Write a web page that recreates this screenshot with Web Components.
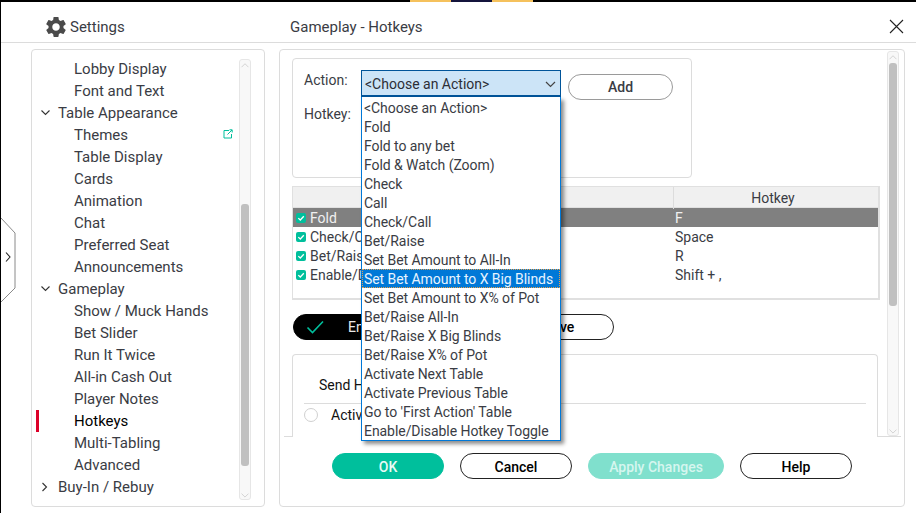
<!DOCTYPE html>
<html lang="en"><head><meta charset="utf-8"><title>Settings</title>
<style>
html,body{margin:0;padding:0;background:#fff;width:916px;height:513px;overflow:hidden}
body{font-family:Roboto,"Liberation Sans",sans-serif;color:#3a3c44}
</style></head><body>
<ps-app></ps-app>
<script>
const def=(name,html,setup)=>customElements.define(name,class extends HTMLElement{
  constructor(){super();this.attachShadow({mode:'open'}).innerHTML=html;}
  connectedCallback(){if(setup)setup(this,this.shadowRoot);}
});
const chevUp='<path d="M2 8 L6.5 3.5 L11 8" fill="none" stroke="#c8c8c8" stroke-width="1"/>';
const chevDown='<path d="M2 4 L6.5 8.5 L11 4" fill="none" stroke="#c8c8c8" stroke-width="1"/>';

def('ps-scrollbar',`<style>
:host{display:flex;flex-direction:column;box-sizing:border-box;width:var(--w,12px);height:var(--h,100%);border:1px solid #e6e6e6;border-radius:3px;background:#f8f8f8}
svg{display:block;width:100%;height:9px;flex:none}
.track{flex:1;padding:var(--before,0) 1px 0;box-sizing:border-box;min-height:0}
.thumb{height:var(--thumb,100px);background:#c0c0c0;border-radius:3px}
</style><svg viewBox="0 0 13 9">${chevUp}</svg><div class="track"><div class="thumb"></div></div><svg viewBox="0 0 13 11" preserveAspectRatio="xMidYMax meet">${chevDown}</svg>`);

def('ps-panel',`<style>
:host{display:block;box-sizing:border-box;border:1px solid #dcdcdc;border-radius:4px;background:#fff}
</style><slot></slot>`);

def('ps-button',`<style>
:host{display:inline-flex;align-items:center;justify-content:center;box-sizing:border-box;height:26px;width:var(--bw,112px);border-radius:13px;font:500 14px Roboto,sans-serif;padding-top:var(--pt,0);border:1px solid #222;color:#000;background:#fff;flex:none}
:host([variant=primary]){background:#00bf9c;border-color:#00bf9c;color:#e9fbf6}
:host([variant=disabled]){background:#80e0cd;border-color:#80e0cd;color:#d6f6ef}
:host([variant=soft]){border-color:#9a9a9a;color:#3a3c44}
:host([variant=dark]){background:#000;border-color:#000;color:#e8e8e8;font-weight:400;justify-content:flex-start;padding-left:12px;gap:23px}
</style><slot></slot>`);

def('ps-header',`<style>
:host{display:flex;align-items:center;box-sizing:border-box;height:41px;border-bottom:1px solid #dcdcdc;padding:9px 0 0 45px;font:15px Roboto,sans-serif;color:#3a3c44}
.a{display:flex;align-items:center;gap:4px;width:244px;flex:none}
.b{flex:1}
svg.g{width:20px;height:20px;display:block;fill:#4a4a4a}
svg.x{width:15px;height:15px;display:block;margin-right:12px}
</style><div class="a"><svg class="g" viewBox="2.4 2.4 19.2 19.2"><path d="M19.14 12.94c.04-.3.06-.61.06-.94 0-.32-.02-.64-.07-.94l2.03-1.58c.18-.14.23-.41.12-.61l-1.92-3.32c-.12-.22-.37-.29-.59-.22l-2.39.96c-.5-.38-1.03-.7-1.62-.94l-.36-2.54c-.04-.24-.24-.41-.48-.41h-3.84c-.24 0-.43.17-.47.41l-.36 2.54c-.59.24-1.13.57-1.62.94l-2.39-.96c-.22-.08-.47 0-.59.22L2.74 8.87c-.12.21-.08.47.12.61l2.03 1.58c-.05.3-.09.63-.09.94s.02.64.07.94l-2.03 1.58c-.18.14-.23.41-.12.61l1.92 3.32c.12.22.37.29.59.22l2.39-.96c.5.38 1.03.7 1.62.94l.36 2.54c.05.24.24.41.48.41h3.84c.24 0 .44-.17.47-.41l.36-2.54c.59-.24 1.13-.56 1.62-.94l2.39.96c.22.08.47 0 .59-.22l1.92-3.32c.12-.22.07-.47-.12-.61l-2.01-1.58zM12 15.6c-1.98 0-3.6-1.62-3.6-3.6s1.62-3.6 3.6-3.6 3.6 1.62 3.6 3.6-1.62 3.6-3.6 3.6z"/></svg><span>Settings</span></div><div class="b">Gameplay - Hotkeys</div><svg class="x" viewBox="0 0 15 15"><path d="M1 1 L14 14 M14 1 L1 14" stroke="#222" stroke-width="1.1" fill="none"/></svg>`);

def('ps-tree-item',`<style>
:host{display:flex;align-items:center;position:relative;height:22px;padding-left:42px;font:15px/22px Roboto,sans-serif;color:#3a3c44;white-space:nowrap}
:host([level="0"]){padding-left:26px}
:host([selected]){color:#000}
:host([selected])::before{content:"";position:absolute;left:4px;top:0;width:3px;height:22px;background:#dc0029}
.c{position:absolute;left:8px;top:7px;width:12px;height:8px;display:none}
:host([open]) .c.o,:host([closed]) .c.s{display:block}
.c.s{left:9px;top:5px;width:8px;height:12px}
.l{position:absolute;left:191px;top:5px;width:10px;height:10px;display:none}
:host([link]) .l{display:block}
</style><svg class="c o" viewBox="0 0 12 8"><path d="M1.5 1.5 L5.5 5.5 L9.5 1.5" fill="none" stroke="#333" stroke-width="1.1"/></svg><svg class="c s" viewBox="0 0 8 12"><path d="M1.5 2 L5.5 6 L1.5 10" fill="none" stroke="#333" stroke-width="1.1"/></svg><slot></slot><svg class="l" viewBox="0 0 10 10" ><path d="M6 1.5 H1 V9 H8.5 V5 M4.5 5.5 L9 1 M6.5 .8 H9.2 V3.5" fill="none" stroke="#00bf9c" stroke-width="1"/></svg>`);

def('ps-sidebar',`<style>
:host{display:block;width:234px;flex:none}
ps-panel{height:458px;display:flex;position:relative;padding:8px 0 0 0;box-sizing:border-box}
.tree{width:207px;flex:none}
.sb{margin-top:1px;--w:12px;--h:441px;--before:135px;--thumb:262px}
</style><ps-panel id="p"><div class="tree">
<ps-tree-item>Lobby Display</ps-tree-item>
<ps-tree-item>Font and Text</ps-tree-item>
<ps-tree-item level="0" open>Table Appearance</ps-tree-item>
<ps-tree-item link>Themes</ps-tree-item>
<ps-tree-item>Table Display</ps-tree-item>
<ps-tree-item>Cards</ps-tree-item>
<ps-tree-item>Animation</ps-tree-item>
<ps-tree-item>Chat</ps-tree-item>
<ps-tree-item>Preferred Seat</ps-tree-item>
<ps-tree-item>Announcements</ps-tree-item>
<ps-tree-item level="0" open>Gameplay</ps-tree-item>
<ps-tree-item>Show / Muck Hands</ps-tree-item>
<ps-tree-item>Bet Slider</ps-tree-item>
<ps-tree-item>Run It Twice</ps-tree-item>
<ps-tree-item>All-in Cash Out</ps-tree-item>
<ps-tree-item>Player Notes</ps-tree-item>
<ps-tree-item selected>Hotkeys</ps-tree-item>
<ps-tree-item>Multi-Tabling</ps-tree-item>
<ps-tree-item>Advanced</ps-tree-item>
<ps-tree-item level="0" closed>Buy-In / Rebuy</ps-tree-item>
</div><ps-scrollbar class="sb"></ps-scrollbar></ps-panel>`);

def('ps-check',`<style>
:host{display:block;width:10px;height:10px;flex:none}
svg{display:block;width:10px;height:10px}
</style><svg viewBox="0 0 10 10"><rect width="10" height="10" rx="2" fill="#00bf9c"/><path d="M2.3 5.1 L4.3 7 L7.8 3.3" fill="none" stroke="#fff" stroke-width="1.3"/></svg>`);

def('ps-hotkey-row',`<style>
:host{display:grid;grid-template-columns:381px 1fr;height:19px;align-items:start;font:14px/21px Roboto,sans-serif;color:#3a3c44;white-space:nowrap}
:host([active]){background:#808080;color:#f0f0f0}
.a{display:flex;align-items:center;gap:4px;padding-left:3px;height:19px}
.a span{height:19px;display:block}
.b{padding-left:1px;height:19px}
</style><div class="a"><ps-check></ps-check><span><slot name="action"></slot></span></div><div class="b"><slot name="key"></slot></div>`);

def('ps-hotkey-table',`<style>
:host{display:block;box-sizing:border-box;width:588px;height:114px;border:2px solid #e0e0e0;border-top-width:1px;border-left-width:1px;background:#fff}
.h{display:grid;grid-template-columns:380px 1fr;height:20px;background:#f0f0f0;font:14px/22px Roboto,sans-serif;color:#3a3c44;border-bottom:1px solid #e0e0e0}
.h div+div{border-left:1px solid #dcdcdc;text-align:center;padding-right:6px}
</style><div class="h"><div></div><div>Hotkey</div></div><slot></slot>`);

def('ps-select',`<style>
:host{display:block;position:relative;width:200px;flex:none;font:14px Roboto,sans-serif}
.v{box-sizing:border-box;height:27px;background:#cce4f7;border:1px solid #005499;border-width:1px 1px 2px;padding-left:3px;line-height:26px;color:#2c2e36;position:relative}
svg{position:absolute;right:4px;top:10px;width:11px;height:7px}
</style><div class="v">&lt;Choose an Action&gt;<svg viewBox="0 0 11 7"><path d="M1 1 L5.5 5.5 L10 1" fill="none" stroke="#444" stroke-width="1.2"/></svg></div><slot></slot>`);

def('ps-menu',`<style>
:host{display:block;position:absolute;left:0;top:27px;width:200px;box-sizing:border-box;border:1px solid #0078d7;border-top-width:0;background:#fff;box-shadow:3px 3px 4px rgba(0,0,0,.45);padding:1px 0 0;z-index:5}
</style><slot></slot>`);

def('ps-option',`<style>
:host{display:block;box-sizing:border-box;height:19px;padding-left:2px;font:14px/21px Roboto,sans-serif;letter-spacing:-.06px;color:#3a3c44;white-space:nowrap}
:host([selected]){background:#0078d7;color:#e8f4ff;outline:1px dotted #e8a04a;outline-offset:-1px}
</style><slot></slot>`);

def('ps-action-form',`<style>
:host{display:block;position:relative;z-index:5}
ps-panel{display:block;width:400px;height:120px;box-sizing:border-box;padding:11px 0 0 11px;font:14px Roboto,sans-serif;color:#3a3c44;background:transparent}
.r{display:flex;align-items:flex-start}
.l{width:57px;flex:none;line-height:20px}
.add{--bw:105px;margin:4px 0 0 7px}
.hk{margin-top:4px}
</style><ps-panel><div class="r"><div class="l">Action:</div><ps-select><ps-menu>
<ps-option>&lt;Choose an Action&gt;</ps-option><ps-option>Fold</ps-option><ps-option>Fold to any bet</ps-option><ps-option>Fold &amp; Watch (Zoom)</ps-option><ps-option>Check</ps-option><ps-option>Call</ps-option><ps-option>Check/Call</ps-option><ps-option>Bet/Raise</ps-option><ps-option>Set Bet Amount to All-In</ps-option><ps-option selected>Set Bet Amount to X Big Blinds</ps-option><ps-option>Set Bet Amount to X% of Pot</ps-option><ps-option>Bet/Raise All-In</ps-option><ps-option>Bet/Raise X Big Blinds</ps-option><ps-option>Bet/Raise X% of Pot</ps-option><ps-option>Activate Next Table</ps-option><ps-option>Activate Previous Table</ps-option><ps-option>Go to 'First Action' Table</ps-option><ps-option>Enable/Disable Hotkey Toggle</ps-option>
</ps-menu></ps-select><ps-button class="add" variant="soft">Add</ps-button></div>
<div class="hk"><div class="l">Hotkey:</div></div></ps-panel>`);

def('ps-send-panel',`<style>
:host{display:block}
ps-panel{display:block;width:586px;height:83px;border-bottom:0;border-radius:4px 4px 0 0;box-sizing:border-box;padding:20px 11px 0 11px;font:14px Roboto,sans-serif;color:#111}
.t{height:29px;line-height:20px;padding-left:15px;border-bottom:1px solid #dcdcdc;box-sizing:border-box}
.o{display:flex;align-items:center;gap:13px;height:20px;margin-top:1px}
i{display:block;width:12px;height:12px;border:1px solid #d0d0d0;border-radius:50%;flex:none}
</style><ps-panel><div class="t">Send Hotkeys</div><div class="o"><i></i><span>Active Table</span></div></ps-panel>`);

def('ps-main',`<style>
:host{display:block;width:626px;flex:none}
ps-panel{display:flex;flex-direction:column;height:458px;box-sizing:border-box}
.top{display:flex;height:387px;flex:none;border-bottom:1px solid #dcdcdc;margin:0 3px 0 4px;box-sizing:border-box}
.c{width:603px;flex:none;padding:8px 0 0 8px;box-sizing:border-box}
ps-hotkey-table{margin-top:8px}
.btns{display:flex;justify-content:space-between;width:321px;margin:14px 0 14px 1px}
.btns ps-button{--bw:130px}
.btns ps-button[variant=dark]{--bw:153px}
ps-send-panel{margin-top:14px}
svg.ck{width:19px;height:14px;display:block;flex:none}
.sb{--w:12px;--h:385px;--before:2px;--thumb:243px;margin-top:1px;flex:none}
.foot{display:flex;gap:16px;padding:16px 0 0 52px;--pt:2px}
</style><ps-panel><div class="top"><div class="c">
<ps-action-form></ps-action-form>
<ps-hotkey-table>
<ps-hotkey-row active><span slot="action">Fold</span><span slot="key">F</span></ps-hotkey-row>
<ps-hotkey-row><span slot="action">Check/Call</span><span slot="key">Space</span></ps-hotkey-row>
<ps-hotkey-row><span slot="action">Bet/Raise</span><span slot="key">R</span></ps-hotkey-row>
<ps-hotkey-row><span slot="action">Enable/Disable Hotkey Toggle</span><span slot="key">Shift + ,</span></ps-hotkey-row>
</ps-hotkey-table>
<div class="btns"><ps-button variant="dark"><svg class="ck" viewBox="0 0 19 14"><path d="M1.5 7.5 L6.5 12.5 L17 1.5" fill="none" stroke="#00bf9c" stroke-width="1.6"/></svg>Enable</ps-button><ps-button>Remove</ps-button></div>
<ps-send-panel></ps-send-panel>
</div><ps-scrollbar class="sb"></ps-scrollbar></div>
<div class="foot"><ps-button variant="primary">OK</ps-button><ps-button>Cancel</ps-button><ps-button variant="disabled" style="--bw:136px">Apply Changes</ps-button><ps-button>Help</ps-button></div>
</ps-panel>`);

def('ps-side-tab',`<style>
:host{display:block;position:absolute;left:0;top:218px;width:15px;height:85px;z-index:2}
svg{display:block;width:15px;height:85px}
</style><svg viewBox="0 0 15 85"><path d="M0 0 L14 15 V70 L0 84" fill="#fff" stroke="#8a8a8a" stroke-width="1"/><path d="M5 34.5 L9 39 L5 43.5" fill="none" stroke="#222" stroke-width="1.1"/></svg>`);

def('ps-topbar',`<style>
:host{display:flex;height:2px;background:#000;padding-left:409px}
i{display:block;height:2px;width:41px}
.y{background:#f5c15c}.d{background:#14143c}
</style><i class="y"></i><i class="d"></i><i class="y"></i>`);

def('ps-app',`<style>
:host{display:block;position:relative;width:916px;height:513px;overflow:hidden;background:#fff;box-sizing:border-box;border-left:1px solid #000}
.body{display:flex;gap:14px;padding:6px 0 0 30px}
</style><ps-topbar></ps-topbar><ps-header></ps-header><ps-side-tab></ps-side-tab><div class="body"><ps-sidebar></ps-sidebar><ps-main></ps-main></div>`);
</script>
</body></html>
